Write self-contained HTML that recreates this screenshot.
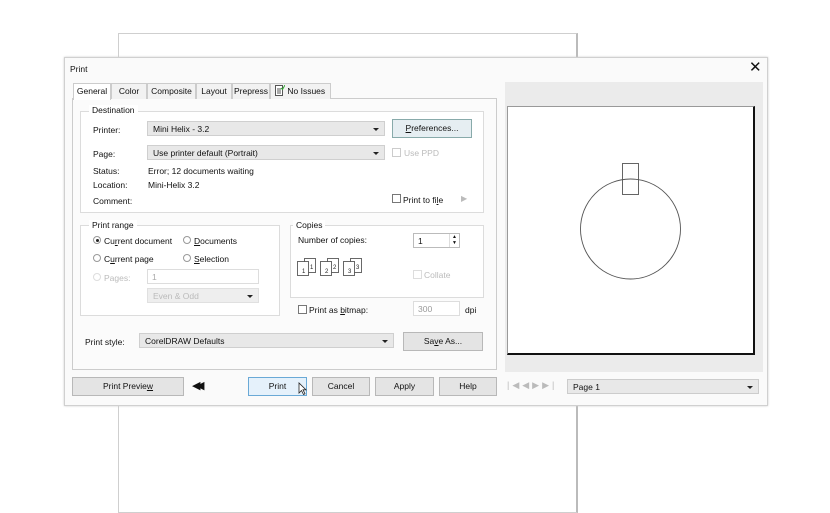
<!DOCTYPE html>
<html><head><meta charset="utf-8"><style>
*{box-sizing:border-box;margin:0;padding:0}
body{width:830px;height:467px;background:#fff;position:relative;overflow:hidden;font-family:"Liberation Sans",sans-serif;font-size:8.5px;color:#111}
.a{position:absolute}
.bg{left:118px;top:33px;width:460px;height:480px;border:1px solid #cfcfcf;border-right:2px solid #bbb;background:#fff}
.dlg{left:64px;top:57px;width:704px;height:349px;background:#fafafa;border:1px solid #d0d0d0;box-shadow:0 0 2px #ccc}
.grp{border:1px solid #dcdcdc;background:#fff}
.lg{background:#fff;padding:0 3px;font-size:8.5px}
.dd{background:#e8e8e8;border:1px solid #cfcfcf;padding:2px 5px;height:15px}
.dd:after{content:"";position:absolute;right:5px;top:6px;border:3px solid transparent;border-top:3px solid #222}
.btn{background:#e4e4e4;border:1px solid #b8b8b8;text-align:center;line-height:17px;height:19px}
.cb{width:9px;height:9px;border:1px solid #777;background:#fff}
.rd{width:8px;height:8px;border:1px solid #999;border-radius:50%;background:#fff}
.dis{color:#bbb}
.tab{top:83px;height:16px;border:1px solid #ccc;border-bottom:none;background:#f2f2f2;line-height:15px;text-align:center}
.inp{background:#fff;border:1px solid #bbb;padding:2px 4px;height:15px}
</style></head><body>
<div class="a bg"></div>
<div class="a dlg"></div>
<div class="a" style="left:70px;top:64px">Print</div>
<div class="a" style="left:749px;top:58px;font-size:15px">✕</div>
<div class="a" style="left:72px;top:98px;width:425px;height:272px;border:1px solid #ccc;background:#fbfbfb"></div>
<div class="a tab" style="left:73px;width:38px;background:#fff;height:17px">General</div>
<div class="a tab" style="left:111px;width:36px">Color</div>
<div class="a tab" style="left:147px;width:49px">Composite</div>
<div class="a tab" style="left:196px;width:36px">Layout</div>
<div class="a tab" style="left:232px;width:38px">Prepress</div>
<div class="a tab" style="left:270px;width:61px;text-align:left;padding-left:4px">
<svg width="10" height="11" style="vertical-align:-2px"><rect x="0.5" y="0.5" width="7" height="10" fill="#fff" stroke="#555"/><path d="M2 4h4M2 6h4M2 8h4" stroke="#555"/><path d="M6 3l1.5 1.5L10 0" stroke="#3a3" fill="none"/></svg> No Issues</div>
<div class="a grp" style="left:80px;top:111px;width:404px;height:102px"></div>
<div class="a lg" style="left:89px;top:105px">Destination</div>
<div class="a" style="left:93px;top:125px">Printer:</div>
<div class="a dd" style="left:147px;top:121px;width:238px">Mini Helix - 3.2</div>
<div class="a btn" style="left:392px;top:119px;width:80px;border-color:#8aa;background:#e6eef2"><u>P</u>references...</div>
<div class="a" style="left:93px;top:149px">Page:</div>
<div class="a dd" style="left:147px;top:145px;width:238px">Use printer default (Portrait)</div>
<div class="a cb" style="left:392px;top:148px;border-color:#ccc"></div>
<div class="a dis" style="left:404px;top:148px">Use PPD</div>
<div class="a" style="left:93px;top:166px">Status:</div>
<div class="a" style="left:148px;top:166px">Error; 12 documents waiting</div>
<div class="a" style="left:93px;top:180px">Location:</div>
<div class="a" style="left:148px;top:180px">Mini-Helix 3.2</div>
<div class="a" style="left:93px;top:196px">Comment:</div>
<div class="a cb" style="left:392px;top:194px"></div>
<div class="a" style="left:403px;top:195px">Print to fi<u>l</u>e</div>
<div class="a" style="left:461px;top:194px;color:#bbb;font-size:8px">▶</div>
<div class="a grp" style="left:80px;top:225px;width:200px;height:91px"></div>
<div class="a lg" style="left:89px;top:220px">Print range</div>
<div class="a rd" style="left:93px;top:236px"></div>
<div class="a" style="left:95.5px;top:238.5px;width:3px;height:3px;border-radius:50%;background:#222"></div>
<div class="a" style="left:104px;top:236px">Cu<u>r</u>rent document</div>
<div class="a rd" style="left:183px;top:236px"></div>
<div class="a" style="left:194px;top:236px"><u>D</u>ocuments</div>
<div class="a rd" style="left:93px;top:254px"></div>
<div class="a" style="left:104px;top:254px">C<u>u</u>rrent page</div>
<div class="a rd" style="left:183px;top:254px"></div>
<div class="a" style="left:194px;top:254px"><u>S</u>election</div>
<div class="a rd" style="left:93px;top:273px;border-color:#ddd"></div>
<div class="a dis" style="left:104px;top:273px">Pages:</div>
<div class="a inp" style="left:147px;top:269px;width:112px;border-color:#ddd;color:#aaa">1</div>
<div class="a dd" style="left:147px;top:288px;width:112px;background:#eee;color:#bbb;border-color:#e0e0e0">Even &amp; Odd</div>
<div class="a grp" style="left:290px;top:225px;width:194px;height:73px"></div>
<div class="a lg" style="left:293px;top:220px">Copies</div>
<div class="a" style="left:298px;top:235px">Number of copies:</div>
<div class="a inp" style="left:413px;top:233px;width:47px">1</div>
<div class="a" style="left:449px;top:234px;width:10px;height:13px;border-left:1px solid #ddd;font-size:5px;line-height:6px;text-align:center">▲<br>▼</div>
<svg class="a" style="left:297px;top:257px" width="68" height="20" fill="#fff" stroke="#444" stroke-width="0.8" font-size="6" font-family="Liberation Sans">
<rect x="7.5" y="1.5" width="11" height="14"/><rect x="0.5" y="4.5" width="11" height="14"/><text x="5" y="16" stroke="none" fill="#222">1</text><text x="13" y="12" stroke="none" fill="#222">1</text>
<rect x="30.5" y="1.5" width="11" height="14"/><rect x="23.5" y="4.5" width="11" height="14"/><text x="28" y="16" stroke="none" fill="#222">2</text><text x="36" y="12" stroke="none" fill="#222">2</text>
<rect x="53.5" y="1.5" width="11" height="14"/><rect x="46.5" y="4.5" width="11" height="14"/><text x="51" y="16" stroke="none" fill="#222">3</text><text x="59" y="12" stroke="none" fill="#222">3</text>
</svg>
<div class="a cb" style="left:413px;top:270px;border-color:#ddd"></div>
<div class="a dis" style="left:424px;top:270px">Collate</div>
<div class="a cb" style="left:298px;top:305px"></div>
<div class="a" style="left:309px;top:305px">Print as <u>b</u>itmap:</div>
<div class="a inp" style="left:413px;top:301px;width:47px;color:#999;border-color:#ddd">300</div>
<div class="a" style="left:465px;top:305px">dpi</div>
<div class="a" style="left:85px;top:337px">Print style:</div>
<div class="a dd" style="left:139px;top:333px;width:255px">CorelDRAW Defaults</div>
<div class="a btn" style="left:403px;top:332px;width:80px">Sa<u>v</u>e As...</div>
<div class="a btn" style="left:72px;top:377px;width:112px">Print Previe<u>w</u></div>
<div class="a" style="left:192px;top:379px;font-size:11px">◀</div><div class="a" style="left:196px;top:379px;font-size:11px">◀</div>
<div class="a btn" style="left:248px;top:377px;width:59px;border-color:#6aa9d6;background:#e5f1fb">Print</div>
<svg class="a" style="left:298px;top:382px" width="10" height="14"><path d="M1 1v10l2.5-2.5 2 4 1.5-.7-2-4H8z" fill="#fff" stroke="#222" stroke-width="0.8"/></svg>
<div class="a btn" style="left:312px;top:377px;width:58px">Cancel</div>
<div class="a btn" style="left:375px;top:377px;width:59px">Apply</div>
<div class="a btn" style="left:439px;top:377px;width:58px">Help</div>
<div class="a" style="left:505px;top:82px;width:258px;height:290px;background:#ebebeb"></div>
<div class="a" style="left:507px;top:106px;width:248px;height:249px;background:#fff;border:1px solid #999;border-right:2px solid #111;border-bottom:2px solid #111"></div>
<svg class="a" style="left:507px;top:106px" width="248" height="249"><circle cx="123.5" cy="123" r="50" fill="none" stroke="#555" stroke-width="0.9"/><rect x="115.5" y="57.5" width="16" height="31" fill="none" stroke="#555" stroke-width="0.9"/></svg>
<div class="a" style="left:507px;top:380px;color:#bbb;font-size:9px;letter-spacing:3px">|◀◀▶▶|</div>
<div class="a dd" style="left:567px;top:379px;width:192px;border-color:#ccc">Page 1</div>
</body></html>
